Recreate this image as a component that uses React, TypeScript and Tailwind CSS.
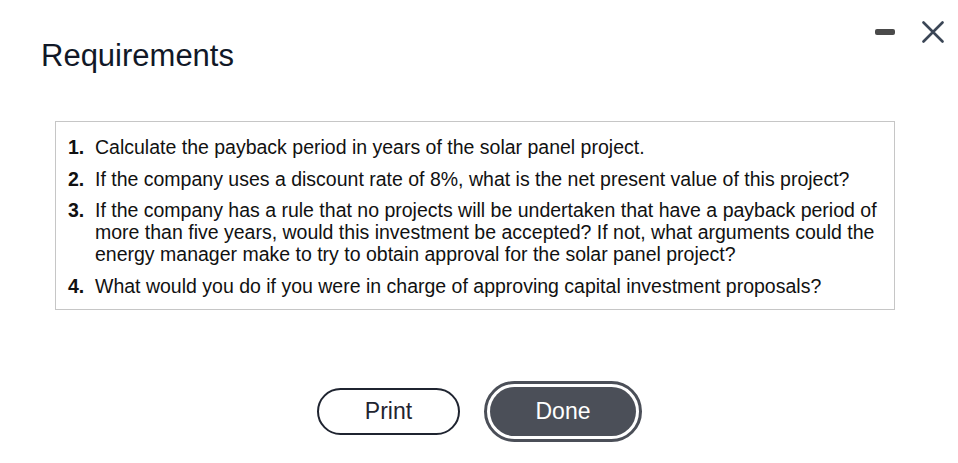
const items = [
  'Calculate the payback period in years of the solar panel project.',
  'If the company uses a discount rate of 8%, what is the net present value of this project?',
  'If the company has a rule that no projects will be undertaken that have a payback period of more than five years, would this investment be accepted? If not, what arguments could the energy manager make to try to obtain approval for the solar panel project?',
  'What would you do if you were in charge of approving capital investment proposals?',
];

export default function App() {
  return (
    <div className="w-[958px] h-[463px] bg-white relative font-['Liberation_Sans',Arial,sans-serif] text-[#1a1a1a]">
      {/* Window controls */}
      <div className="absolute top-[21px] left-[875px] flex items-center gap-[27px]">
        <div className="w-[20px] h-[6px] rounded-[2px] bg-[#4a4a4a]" />
        <svg width="22" height="22" viewBox="0 0 22 22" className="text-[#3b4656]">
          <path d="M1.5 1.5 L20.5 20.5 M20.5 1.5 L1.5 20.5" stroke="currentColor" strokeWidth="2.6" strokeLinecap="round" />
        </svg>
      </div>

      <div className="pt-[38px] pl-[41px]">
        <h1 className="text-[31px] leading-[36px] text-[#111827]">Requirements</h1>
      </div>

      <div className="mt-[47px] ml-[55px] w-[840px] border border-[#c6c6c6] pl-[12px] pr-[14px] pt-[14px] pb-[12px]">
        <ol className="flex flex-col gap-[9.5px]">
          {items.map((text, i) => (
            <li key={i} className="flex text-[19.5px] leading-[22px] text-[#111]">
              <span className="w-[27px] shrink-0 font-bold">{i + 1}.</span>
              <span>{text}</span>
            </li>
          ))}
        </ol>
      </div>

      <div className="flex justify-center items-center gap-[24px] mt-[71px] pl-[1px]">
        <button className="w-[143px] h-[47px] rounded-full border-2 border-[#1f2430] bg-white text-[23px] text-[#1f2430]">
          Print
        </button>
        <div className="rounded-full border-[3px] border-[#4b4f58] p-[3px]">
          <button className="w-[146px] h-[49px] rounded-full bg-[#4b4f58] text-[23px] text-white">
            Done
          </button>
        </div>
      </div>
    </div>
  );
}
